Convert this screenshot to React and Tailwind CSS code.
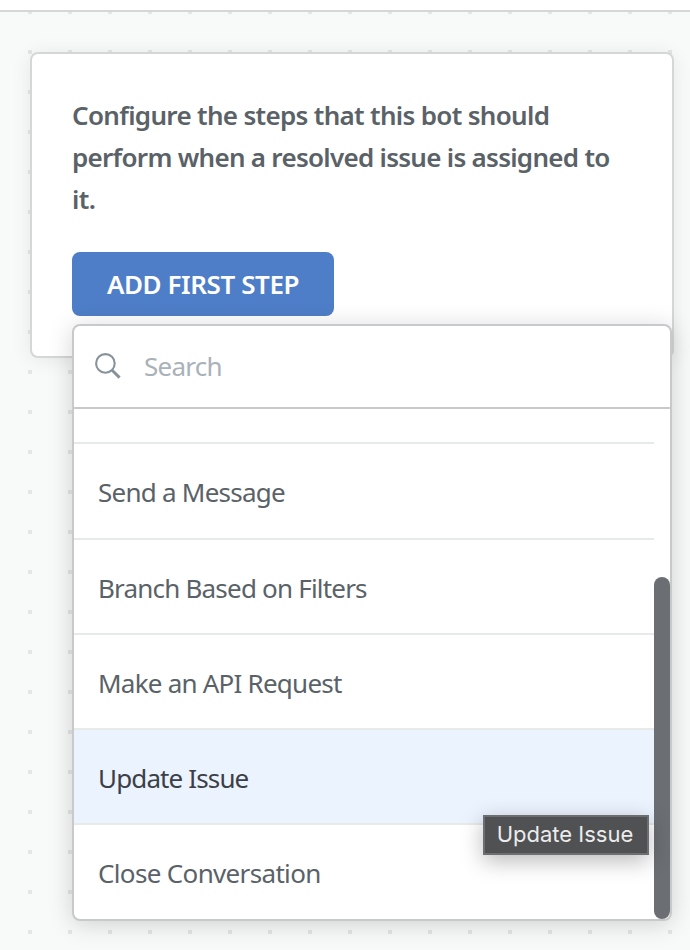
import { useState } from 'react';
import clsx from 'clsx';

const steps = [
  { label: 'Send a Message', height: 'h-24 pt-[3px]', tracking: 'tracking-[-0.75px]' },
  { label: 'Branch Based on Filters', height: 'h-[95px] pt-1', tracking: 'tracking-[-0.8px]' },
  { label: 'Make an API Request', height: 'h-[95px] pt-1', tracking: 'tracking-[-0.77px]' },
  { label: 'Update Issue', height: 'h-[95px] pt-1', tracking: 'tracking-[-0.87px]' },
  { label: 'Close Conversation', height: 'h-[94px] pt-[3px]', tracking: 'tracking-[-0.66px]' },
];

const SearchIcon = () => (
  <svg className="w-7 h-7 shrink-0 text-[#87929a]" fill="none" stroke="currentColor" viewBox="0 0 28 28">
    <circle cx="11.4" cy="10.4" r="9.3" strokeWidth="2.1" />
    <path d="M17.6 16.8l8 7.8" strokeWidth="2.9" />
  </svg>
);

const StepMenu = () => {
  const [query, setQuery] = useState('');
  const [active, setActive] = useState('Update Issue');

  return (
    <div className="absolute left-10 top-[270px] flex h-[597px] w-[600px] flex-col rounded-lg border-2 border-[#c8c9ca] bg-white shadow-[0_3px_24px_rgba(0,0,0,0.17)]">
      <label className="flex h-[83px] shrink-0 items-center border-b-2 border-[#c8c9ca] pl-5">
        <SearchIcon />
        <input
          value={query}
          onChange={(e) => setQuery(e.target.value)}
          placeholder="Search"
          className="ml-[22px] w-96 bg-transparent text-[26px] tracking-[-0.75px] outline-none placeholder:text-[#a9b1b9]"
        />
      </label>

      <div className="flex min-h-0 flex-1">
        <div className="w-[580px]">
          {/* Tail of the row that is scrolled out of view */}
          <div className="h-[35px] border-b-2 border-[#e8e9e9]" />
          {steps.map((step) => (
            <div
              key={step.label}
              onMouseEnter={() => setActive(step.label)}
              className={clsx(
                'flex items-center border-b-2 border-[#e8e9e9] pl-6 text-[26px] last:border-b-0',
                step.height,
                step.tracking,
                active === step.label ? 'bg-[#ebf3fe] text-[#3b4048]' : 'text-[#5a6268]'
              )}
            >
              <span className="whitespace-nowrap">{step.label}</span>
            </div>
          ))}
        </div>
        <div className="mt-[168px] w-4 rounded-full bg-[#6b6e73]" />
      </div>

      <div className="absolute left-[409px] top-[489px] flex h-10 w-[166px] items-center justify-center border-2 border-[#6c6f72] bg-[#4f5153] pb-0.5 pr-0.5 font-[Inter,sans-serif] text-[22px] text-[#ececec] shadow-[0_6px_22px_rgba(0,0,0,0.28)]">
        <span className="whitespace-nowrap">{active}</span>
      </div>
    </div>
  );
};

export default function App() {
  return (
    <div className="flex h-[950px] w-[690px] flex-col overflow-hidden bg-white font-['Noto_Sans',sans-serif]">
      <div className="h-3 shrink-0 border-b-2 border-[#d5d7d7]" />
      <main className="flex-1 bg-[#f8faf9] bg-[conic-gradient(from_0deg_at_4px_4px,transparent_75%,#e4e6e6_75%)] bg-[length:40px_40px] bg-[position:28px_-2px] pl-[30px] pt-10">
        <div className="relative h-[306px] w-[644px] rounded-lg border-2 border-[#d5d7d7] bg-white px-10 pt-10 shadow-[0_2px_20px_rgba(0,0,0,0.08)]">
          <p className="whitespace-nowrap text-[26px] font-semibold leading-[42px] text-[#5a6268]">
            <span className="block tracking-[-0.68px]">Configure the steps that this bot should</span>
            <span className="block tracking-[-0.72px]">perform when a resolved issue is assigned to</span>
            <span className="block tracking-[-0.6px]">it.</span>
          </p>
          <button className="mt-8 flex h-16 w-[262px] items-center justify-center whitespace-nowrap rounded-lg bg-[#4e7ec7] text-[26px] font-semibold tracking-[-0.42px] text-white">
            ADD FIRST STEP
          </button>
          <StepMenu />
        </div>
      </main>
    </div>
  );
}
